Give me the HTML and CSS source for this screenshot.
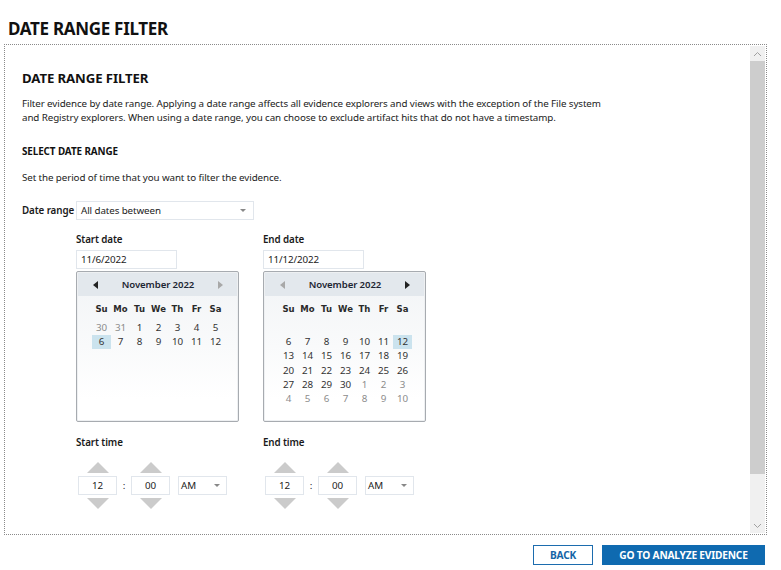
FILE: index.html
```html
<!DOCTYPE html>
<html>
<head>
<meta charset="utf-8">
<link rel="stylesheet" href="styles.css">
</head>
<body>
<h1 class="page-title">DATE RANGE FILTER</h1>
<div class="panel">
  <div class="content">
    <h2 class="heading">DATE RANGE FILTER</h2>
    <p class="desc">Filter evidence by date range. Applying a date range affects all evidence explorers and views with the exception of the File system<br>and Registry explorers. When using a date range, you can choose to exclude artifact hits that do not have a timestamp.</p>
    <h3 class="subheading">SELECT DATE RANGE</h3>
    <p class="desc2">Set the period of time that you want to filter the evidence.</p>
    <div class="range-row">
      <span class="label">Date range</span>
      <div class="select wide"><span>All dates between</span><span class="caret"></span></div>
    </div>
    <div class="date-cols">
      <div class="date-col">
        <div class="label">Start date</div>
        <div class="input date-input">11/6/2022</div>
        <div class="calendar">
          <div class="cal-head">
            <span class="arrow left"></span>
            <span class="month">November 2022</span>
            <span class="arrow right off"></span>
          </div>
          <div class="dow"><span>Su</span><span>Mo</span><span>Tu</span><span>We</span><span>Th</span><span>Fr</span><span>Sa</span></div>
          <div class="days">
            <span class="other">30</span><span class="other">31</span><span>1</span><span>2</span><span>3</span><span>4</span><span>5</span>
            <span class="sel">6</span><span>7</span><span>8</span><span>9</span><span>10</span><span>11</span><span>12</span>
          </div>
        </div>
        <div class="label time-label">Start time</div>
        <div class="time-row">
          <div class="spinner"><span class="up"></span><div class="input num">12</div><span class="down"></span></div>
          <span class="colon">:</span>
          <div class="spinner"><span class="up"></span><div class="input num">00</div><span class="down"></span></div>
          <div class="select ampm"><span>AM</span><span class="caret"></span></div>
        </div>
      </div>
      <div class="date-col">
        <div class="label">End date</div>
        <div class="input date-input">11/12/2022</div>
        <div class="calendar">
          <div class="cal-head">
            <span class="arrow left off"></span>
            <span class="month">November 2022</span>
            <span class="arrow right"></span>
          </div>
          <div class="dow"><span>Su</span><span>Mo</span><span>Tu</span><span>We</span><span>Th</span><span>Fr</span><span>Sa</span></div>
          <div class="days">
            <span></span><span></span><span></span><span></span><span></span><span></span><span></span>
            <span>6</span><span>7</span><span>8</span><span>9</span><span>10</span><span>11</span><span class="sel">12</span>
            <span>13</span><span>14</span><span>15</span><span>16</span><span>17</span><span>18</span><span>19</span>
            <span>20</span><span>21</span><span>22</span><span>23</span><span>24</span><span>25</span><span>26</span>
            <span>27</span><span>28</span><span>29</span><span>30</span><span class="other">1</span><span class="other">2</span><span class="other">3</span>
            <span class="other">4</span><span class="other">5</span><span class="other">6</span><span class="other">7</span><span class="other">8</span><span class="other">9</span><span class="other">10</span>
          </div>
        </div>
        <div class="label time-label">End time</div>
        <div class="time-row">
          <div class="spinner"><span class="up"></span><div class="input num">12</div><span class="down"></span></div>
          <span class="colon">:</span>
          <div class="spinner"><span class="up"></span><div class="input num">00</div><span class="down"></span></div>
          <div class="select ampm"><span>AM</span><span class="caret"></span></div>
        </div>
      </div>
    </div>
  </div>
  <div class="scrollbar">
    <div class="sb-btn"><svg width="9" height="6" viewBox="0 0 9 6"><path d="M1 5 L4.5 1.5 L8 5" fill="none" stroke="#a0a0a0" stroke-width="1"/></svg></div>
    <div class="sb-thumb"></div>
    <div class="sb-track"></div>
    <div class="sb-btn"><svg width="9" height="6" viewBox="0 0 9 6"><path d="M1 1 L4.5 4.5 L8 1" fill="none" stroke="#a0a0a0" stroke-width="1"/></svg></div>
  </div>
</div>
<div class="footer">
  <button class="btn back">BACK</button>
  <button class="btn primary">GO TO ANALYZE EVIDENCE</button>
</div>
</body>
</html>
```
FILE: styles.css
```css
* { box-sizing: border-box; }
html, body { margin: 0; padding: 0; background: #fff; }
body {
  font-family: "Noto Sans", "Open Sans", sans-serif;
  font-size: 9.8px;
  letter-spacing: -0.1px;
  color: #1e1e1e;
  width: 781px;
  height: 570px;
  overflow: hidden;
}
.page-title {
  margin: 0;
  height: 44px;
  padding: 18px 0 0 8px;
  font-size: 17px;
  line-height: 22px;
  font-weight: 700;
  letter-spacing: -0.3px;
  color: #111;
}
.panel {
  margin: 0 14px 0 4px;
  height: 491px;
  border: 1px dotted #8a8a8a;
  display: flex;
}
.content {
  flex: 1;
  padding: 24px 0 0 17px;
}
.heading {
  margin: 0;
  font-size: 13.2px;
  line-height: 18px;
  font-weight: 700;
  color: #111;
}
.desc {
  margin: 10px 0 0;
  line-height: 14px;
  color: #222;
}
.subheading {
  margin: 19px 0 0;
  font-size: 9.9px;
  line-height: 14px;
  font-weight: 700;
  color: #111;
}
.desc2 {
  margin: 13px 0 0;
  line-height: 14px;
  color: #222;
}
.range-row {
  margin-top: 16px;
  display: flex;
  align-items: center;
  height: 19px;
}
.label {
  font-weight: 600;
  line-height: 14px;
  color: #1a1a1a;
  white-space: nowrap;
}
.range-row .label { width: 54px; }
.select {
  height: 19px;
  border: 1px solid #e1e6ec;
  background: #fff;
  display: flex;
  align-items: center;
  justify-content: space-between;
  padding: 0 7px 0 4px;
  color: #222;
}
.select.wide { width: 178px; }
.caret {
  width: 0;
  height: 0;
  border-left: 3px solid transparent;
  border-right: 3px solid transparent;
  border-top: 3px solid #888;
}
.date-cols {
  display: flex;
  gap: 24px;
  margin: 13px 0 0 54px;
}
.date-col {
  width: 163px;
}
.input {
  height: 19px;
  border: 1px solid #e1e6ec;
  background: #fff;
  line-height: 17px;
  color: #222;
}
.date-input {
  margin-top: 3px;
  width: 101px;
  padding-left: 4px;
}
.calendar {
  margin-top: 2px;
  height: 151px;
  border: 1px solid #a7abb0;
  border-radius: 2px;
  padding: 1px;
  background: linear-gradient(#f2f4f6 0%, #f9fafb 50%, #fff 85%);
  box-shadow: 0 0 0 1px #eef0f2 inset;
}
.cal-head {
  height: 23px;
  background: #e3e8ed;
  display: flex;
  align-items: center;
  justify-content: space-between;
  padding: 0 14px 0 15px;
}
.month {
  font-weight: 600;
  font-size: 9.6px;
  color: #1d2633;
}
.arrow {
  width: 0;
  height: 0;
  border-top: 4px solid transparent;
  border-bottom: 4px solid transparent;
}
.arrow.left { border-right: 5px solid #222; }
.arrow.right { border-left: 5px solid #222; }
.arrow.left.off { border-right-color: #a8a8a8; }
.arrow.right.off { border-left-color: #a8a8a8; }
.dow {
  display: grid;
  grid-template-columns: repeat(7, 19px);
  margin: 6px 0 0 14px;
  height: 14px;
  line-height: 14px;
  font-family: "DejaVu Sans", Verdana, sans-serif;
  font-weight: 700;
  font-size: 8.5px;
  letter-spacing: 0;
  color: #2a2a2a;
  text-align: center;
}
.days {
  display: grid;
  grid-template-columns: repeat(7, 19px);
  grid-auto-rows: 14.2px;
  margin: 5px 0 0 14px;
  text-align: center;
  line-height: 14px;
  color: #333;
}
.days .other { color: #8c8c8c; }
.days .sel { background: #cbe3ee; }
.time-label {
  margin-top: 14px;
}
.time-row {
  display: flex;
  align-items: center;
  margin-top: 12px;
  margin-left: 2px;
}
.spinner {
  width: 39px;
  display: flex;
  flex-direction: column;
  align-items: center;
}
.up, .down {
  width: 0;
  height: 0;
  border-left: 11px solid transparent;
  border-right: 11px solid transparent;
}
.up { border-bottom: 11px solid #cbcbcb; margin-bottom: 3px; }
.down { border-top: 11px solid #cbcbcb; margin-top: 3px; }
.num {
  width: 39px;
  text-align: center;
}
.colon {
  width: 14px;
  text-align: center;
  color: #222;
}
.select.ampm {
  width: 49px;
  margin-left: 8px;
  padding: 0 6px 0 2px;
}
.scrollbar {
  width: 15px;
  margin: 1px 1px 1px 0;
  background: #f0f0f0;
  display: flex;
  flex-direction: column;
}
.sb-btn {
  height: 15px;
  display: flex;
  align-items: center;
  justify-content: center;
}
.sb-thumb {
  height: 413px;
  background: #cdcdcd;
}
.sb-track { flex: 1; }
.footer {
  display: flex;
  justify-content: flex-end;
  gap: 9px;
  margin-top: 10px;
  padding-right: 16px;
}
.btn {
  height: 20px;
  font-family: "Noto Sans", "Open Sans", sans-serif;
  font-size: 10.2px;
  font-weight: 700;
  letter-spacing: -0.2px;
  padding: 0;
  cursor: pointer;
}
.btn.back {
  width: 60px;
  background: #fff;
  color: #1565a7;
  border: 1px solid #1c6cae;
}
.btn.primary {
  width: 163px;
  background: #0f6ab0;
  color: #fff;
  border: 1px solid #0f6ab0;
}
```
